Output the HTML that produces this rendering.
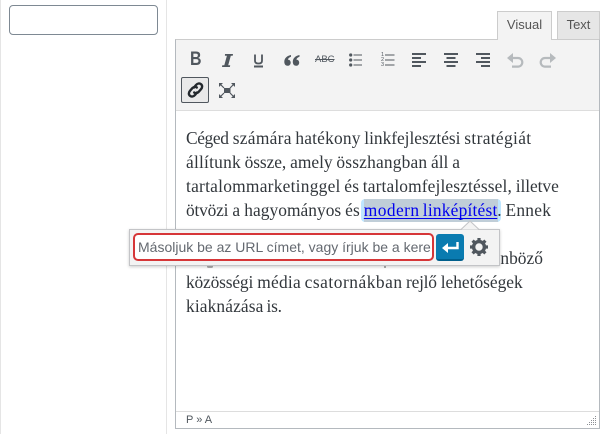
<!DOCTYPE html>
<html><head><meta charset="utf-8"><style>
html,body{margin:0;padding:0;width:606px;height:434px;overflow:hidden;background:#fff;font-family:"Liberation Sans",sans-serif}
.a{position:absolute;box-sizing:border-box}
svg{position:absolute;overflow:visible}
#t text{font:17.4px "Liberation Serif",serif;fill:#32373c}
</style></head><body>
<div class="a" style="left:0;top:0;width:1px;height:434px;background:#e5e5e5"></div>
<div class="a" style="left:166px;top:0;width:1px;height:434px;background:#e5e5e5"></div>
<div class="a" style="left:9px;top:5px;width:149px;height:30px;border:1px solid #7e8993;border-radius:4px;background:#fff"></div>

<div class="a" style="left:497px;top:11px;width:55px;height:29px;border:1px solid #ccc;border-bottom:0;background:#f3f3f3;z-index:3;font-size:13px;line-height:26px;text-align:center;color:#555">Visual</div>
<div class="a" style="left:557px;top:11px;width:43px;height:28px;border:1px solid #ccc;border-bottom:0;background:#e6e6e6;font-size:13px;line-height:26px;text-align:center;color:#555">Text</div>

<div class="a" style="left:175px;top:39px;width:425px;height:390px;border:1px solid #b4b9be;border-top-color:#ccc;background:#fff"></div>
<div class="a" style="left:176px;top:40px;width:423px;height:71px;background:#f3f3f3;border-bottom:1px solid #ddd"></div>

<!-- toolbar icons -->
<div class="a" style="left:190px;top:50px;font:bold 19px/20px 'Liberation Sans',sans-serif;color:#50575e;transform:scaleX(.84);transform-origin:0 0">B</div>
<svg style="left:222px;top:54px" width="11" height="13" fill="#50575e"><path d="M3 0h8l-.3 1.800H8.800L6.200 11.200h2L7.900 13H0l.3-1.800h2L4.900 1.800h-2z"/></svg>
<svg style="left:253px;top:54px" width="11" height="14" fill="none" stroke="#50575e"><path d="M2 .5v6.200c0 2 1.400 2.800 3.500 2.800s3.500-.8 3.500-2.800V.5" stroke-width="1.800"/><path d="M1 12.500h9" stroke-width="2"/></svg>
<svg style="left:284px;top:55px" width="16" height="11" fill="#50575e"><path d="M7 0C3 .8.300 3.200.300 6.800c0 2.500 1.300 4 3.200 4s3.200-1.300 3.200-3.200c0-1.700-1.100-2.900-2.800-3C4.200 3.300 5.400 2.400 7 1.800zM15.500 0c-4 .8-6.700 3.200-6.700 6.800 0 2.500 1.300 4 3.200 4s3.200-1.300 3.200-3.200c0-1.700-1.100-2.900-2.800-3 .3-1.300 1.500-2.200 3.100-2.800z"/></svg>
<div class="a" style="left:315px;top:54px;font:9.500px/12px 'Liberation Sans',sans-serif;color:#50575e;text-decoration:line-through">ABC</div>
<svg style="left:349px;top:53px" width="14" height="14" fill="#50575e"><circle cx="1.700" cy="2" r="1.600"/><circle cx="1.700" cy="7" r="1.600"/><circle cx="1.700" cy="12" r="1.600"/><rect x="4.500" y="1.500" width="8.500" height="1"/><rect x="4.500" y="6.500" width="8.500" height="1"/><rect x="4.500" y="11.500" width="8.500" height="1"/></svg>
<div class="a" style="left:381px;top:52.500px;font:5.500px/5px 'Liberation Sans',sans-serif;color:#50575e">1<br>2<br>3</div>
<svg style="left:385px;top:53px" width="12" height="14" fill="#50575e"><rect x="0" y="1.500" width="9.500" height="1"/><rect x="0" y="6.500" width="9.500" height="1"/><rect x="0" y="11.500" width="9.500" height="1"/></svg>
<svg style="left:412px;top:52px" width="14" height="16" fill="#50575e"><rect y="1" width="14" height="2"/><rect y="5" width="9" height="2"/><rect y="9" width="14" height="2"/><rect y="13" width="9" height="2"/></svg>
<svg style="left:444px;top:52px" width="14" height="16" fill="#50575e"><rect y="1" width="14" height="2"/><rect x="2.500" y="5" width="9" height="2"/><rect y="9" width="14" height="2"/><rect x="2.500" y="13" width="9" height="2"/></svg>
<svg style="left:476px;top:52px" width="14" height="16" fill="#50575e"><rect y="1" width="14" height="2"/><rect x="5" y="5" width="9" height="2"/><rect y="9" width="14" height="2"/><rect x="5" y="13" width="9" height="2"/></svg>
<svg style="left:507px;top:52px" width="17" height="16" fill="none" stroke="#b6babd" stroke-width="2.200"><path d="M3 6h8a4.300 4.300 0 0 1 0 8.600H5"/><path d="M0 6l6-5v10z" fill="#b6babd" stroke="none"/></svg>
<svg style="left:539px;top:52px" width="17" height="16" fill="none" stroke="#b6babd" stroke-width="2.200"><path d="M14 6H6a4.300 4.300 0 0 0 0 8.600h6"/><path d="M17 6l-6-5v10z" fill="#b6babd" stroke="none"/></svg>

<div class="a" style="left:181px;top:77px;width:28px;height:26px;border:1px solid #50575e;border-radius:2px;background:#e9e9e9"></div>
<svg style="left:186px;top:81px" width="19" height="19" fill="none" stroke="#23282d" stroke-width="2.400" stroke-linecap="round"><path d="M8 6.500l2-2.500c1.500-1.700 3.500-2 5-.8s1.500 3.300 0 5l-2.500 2.800c-1.300 1.300-3 1.500-4.300.5"/><path d="M11 11.500l-2 2.500c-1.500 1.700-3.500 2-5 .8s-1.500-3.300 0-5l2.500-2.800c1.300-1.300 3-1.500 4.300-.5"/></svg>
<svg style="left:219px;top:83px" width="16" height="15"><rect x="5" y="5" width="6.500" height="5" fill="#50575e"/><g fill="#50575e"><path d="M0 0h4L0 4zM16 0v4l-4-4zM0 15v-4l4 4zM16 15h-4l4-4z"/></g><path d="M1.500 1.500L5 5M14.500 1.500L11 5M1.500 13.500L5 10M14.500 13.500L11 10" stroke="#50575e" stroke-width="1.200"/></svg>

<!-- highlight -->
<div class="a" style="left:361px;top:199px;width:140px;height:23px;background:#bfe6ff;border-radius:4px"></div>
<div class="a" style="left:364px;top:199px;width:134px;height:23px;background:#c0ced8"></div>

<!-- editor text -->
<svg id="t" style="left:0;top:0" width="606" height="434">
<text x="186" y="144" textLength="42.900">Céged</text><text x="232.700" y="144" textLength="58.800">számára</text><text x="295.400" y="144" textLength="65">hatékony</text><text x="364.300" y="144" textLength="96.200">linkfejlesztési</text><text x="464.300" y="144" textLength="66.800">stratégiát</text>
<text x="186" y="168" textLength="54.700">állítunk</text><text x="244.600" y="168" textLength="41.600">össze,</text><text x="290.100" y="168" textLength="42.500">amely</text><text x="336.400" y="168" textLength="90.700">összhangban</text><text x="431" y="168" textLength="17.400">áll</text><text x="452.300" y="168" textLength="8.100">a</text>
<text x="186" y="192" textLength="154.400">tartalommarketinggel</text><text x="344.300" y="192" textLength="14.700">és</text><text x="362.800" y="192" textLength="149">tartalomfejlesztéssel,</text><text x="515.700" y="192" textLength="43.100">illetve</text>
<text x="186" y="216" textLength="42.500">ötvözi</text><text x="232.400" y="216" textLength="8.100">a</text><text x="244.300" y="216" textLength="96.900">hagyományos</text><text x="345.100" y="216" textLength="14.700">és</text>
<text x="363.800" y="216" textLength="55.300" style="fill:#0000ee">modern</text><text x="422.800" y="216" textLength="74.500" style="fill:#0000ee">linképítést</text>
<text x="497.300" y="216">.</text><text x="505.500" y="216" textLength="45.400">Ennek</text>
<text x="469.300" y="264" textLength="73.700">különböző</text>
<text x="186" y="288" textLength="67.300">közösségi</text><text x="257.200" y="288" textLength="43.500">média</text><text x="304.600" y="288" textLength="97.500">csatornákban</text><text x="406" y="288" textLength="31">rejlő</text><text x="440.700" y="288" textLength="82">lehetőségek</text>
<text x="186" y="312" textLength="77.400">kiaknázása</text><text x="266.500" y="312" textLength="15.500">is.</text>
<rect x="363.800" y="218" width="133.500" height="1" fill="#0000ee"/>
</svg>

<!-- popover -->
<div class="a" style="left:207px;top:265px;width:6px;height:3px;background:#777;border-radius:2px;opacity:.6"></div>
<div class="a" style="left:384px;top:265px;width:2px;height:3px;background:#777;opacity:.6"></div>
<div class="a" style="left:129px;top:229px;width:371px;height:37px;background:#f3f3f3;border:1px solid #c3c4c7;box-shadow:0 1px 3px rgba(0,0,0,.2);z-index:5"></div>
<svg style="left:461px;top:220px;z-index:6" width="18" height="10"><path d="M0 9.500L9 1l9 8.500" fill="#f3f3f3" stroke="#c3c4c7"/></svg>
<div class="a" style="left:133px;top:233px;width:301px;height:28px;background:#fff;border:2px solid #d63638;border-radius:5px;z-index:6;font-size:14px;line-height:24px;color:#646970;padding-left:3px;white-space:nowrap;overflow:hidden">Másoljuk be az URL címet, vagy írjuk be a kere</div>
<div class="a" style="left:436px;top:234px;width:28px;height:27px;background:#0a7bb0;border-bottom:2px solid #005f8c;border-radius:3px;z-index:6"></div>
<svg style="left:441px;top:241px;z-index:7" width="19" height="13"><path d="M16.500 1v6H5" fill="none" stroke="#fff" stroke-width="2.400"/><path d="M1 7l6-5v10z" fill="#fff"/></svg>
<svg style="left:470px;top:238px;z-index:7" width="18" height="18" viewBox="0 0 18 18"><circle cx="9" cy="9" r="5.400" fill="none" stroke="#50575e" stroke-width="3.400"/><g stroke="#50575e" stroke-width="3.200"><path d="M9 0v3.500M9 14.500V18M0 9h3.500M14.500 9H18M2.600 2.600l2.500 2.500M12.900 12.900l2.500 2.500M15.400 2.600l-2.500 2.500M5.100 12.900l-2.500 2.500"/></g></svg>

<!-- status bar -->
<div class="a" style="left:176px;top:411px;width:423px;height:1px;background:#ddd"></div>
<div class="a" style="left:186px;top:413px;font-size:11px;line-height:14px;color:#50575e">P » A</div>
<svg style="left:587px;top:416px" width="10" height="10" fill="#8c8f94"><rect x="8" y="0" width="1" height="1"/><rect x="6" y="2" width="1" height="1"/><rect x="8" y="2" width="1" height="1"/><rect x="4" y="4" width="1" height="1"/><rect x="6" y="4" width="1" height="1"/><rect x="8" y="4" width="1" height="1"/><rect x="2" y="6" width="1" height="1"/><rect x="4" y="6" width="1" height="1"/><rect x="6" y="6" width="1" height="1"/><rect x="8" y="6" width="1" height="1"/><rect x="0" y="8" width="1" height="1"/><rect x="2" y="8" width="1" height="1"/><rect x="4" y="8" width="1" height="1"/><rect x="6" y="8" width="1" height="1"/><rect x="8" y="8" width="1" height="1"/></svg>
</body></html>
